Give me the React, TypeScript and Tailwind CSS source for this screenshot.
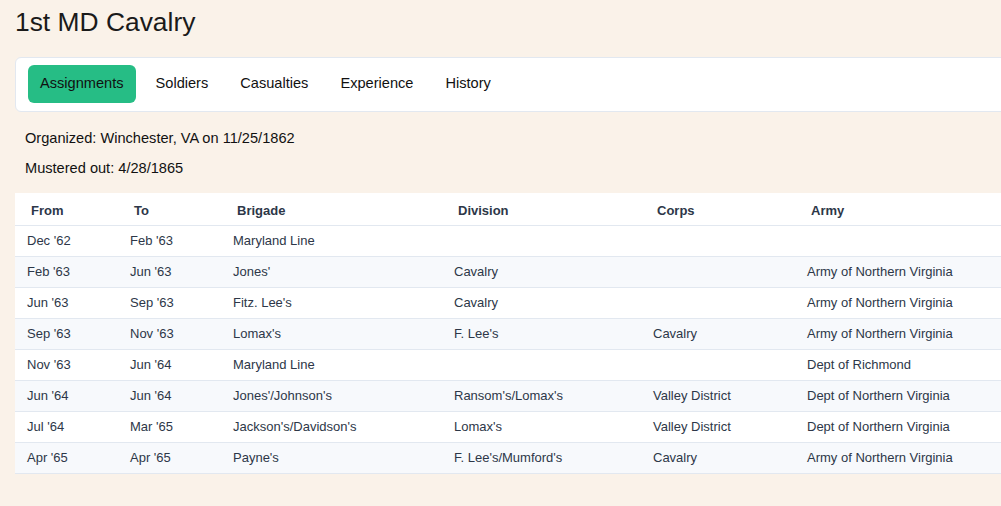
import React from 'react'

// ─── Data ─────────────────────────────────────────────────────────────────────

const TABS = ['Assignments', 'Soldiers', 'Casualties', 'Experience', 'History']

const COLUMNS = [
  { label: 'From',     width: 'w-[103px]' },
  { label: 'To',       width: 'w-[103px]' },
  { label: 'Brigade',  width: 'w-[221px]' },
  { label: 'Division', width: 'w-[199px]' },
  { label: 'Corps',    width: 'w-[154px]' },
  { label: 'Army',     width: 'w-[230px]' },
]

const ROWS = [
  ["Dec '62", "Feb '63", 'Maryland Line',         '',                   '',               ''],
  ["Feb '63", "Jun '63", "Jones'",                'Cavalry',            '',               'Army of Northern Virginia'],
  ["Jun '63", "Sep '63", "Fitz. Lee's",           'Cavalry',            '',               'Army of Northern Virginia'],
  ["Sep '63", "Nov '63", "Lomax's",               "F. Lee's",           'Cavalry',        'Army of Northern Virginia'],
  ["Nov '63", "Jun '64", 'Maryland Line',         '',                   '',               'Dept of Richmond'],
  ["Jun '64", "Jun '64", "Jones'/Johnson's",      "Ransom's/Lomax's",   'Valley District', 'Dept of Northern Virginia'],
  ["Jul '64", "Mar '65", "Jackson's/Davidson's",  "Lomax's",            'Valley District', 'Dept of Northern Virginia'],
  ["Apr '65", "Apr '65", "Payne's",               "F. Lee's/Mumford's", 'Cavalry',        'Army of Northern Virginia'],
]

// ─── Tabs ─────────────────────────────────────────────────────────────────────

function TabBar({ active }: { active: string }) {
  return (
    <div className="flex w-[1010px] items-center gap-2 rounded-md border border-[#e2e8f0] bg-white px-3 pt-[7px] pb-[8px]">
      {TABS.map(tab => (
        <button
          key={tab}
          className={
            tab === active
              ? 'h-[38px] rounded-md bg-[#26bd85] px-3 text-[14.6px] text-[#111]'
              : 'h-[38px] rounded-md px-3 text-[14.6px] text-[#111]'
          }
        >
          {tab}
        </button>
      ))}
    </div>
  )
}

// ─── Assignments table ───────────────────────────────────────────────────────

function AssignmentsTable() {
  return (
    <table className="w-[1010px] table-fixed border-collapse bg-white text-[13px] text-[#2d3748]">
      <colgroup>
        {COLUMNS.map(c => (
          <col key={c.label} className={c.width} />
        ))}
      </colgroup>
      <thead>
        <tr className="h-[32px] border-b border-[#e2e8f0]">
          {COLUMNS.map(c => (
            <th key={c.label} className="pl-4 pt-[3px] text-left font-bold">
              {c.label}
            </th>
          ))}
        </tr>
      </thead>
      <tbody>
        {ROWS.map((row, i) => (
          <tr
            key={i}
            className={
              i % 2 === 1
                ? 'h-[31px] border-b border-[#e2e8f0] bg-[#f7f9fc]'
                : 'h-[31px] border-b border-[#e2e8f0] bg-white'
            }
          >
            {row.map((cell, j) => (
              <td key={j} className="pl-3 whitespace-nowrap">
                {cell}
              </td>
            ))}
          </tr>
        ))}
      </tbody>
    </table>
  )
}

// ─── Page ─────────────────────────────────────────────────────────────────────

export default function App() {
  return (
    <div className="h-[506px] w-[1001px] overflow-hidden bg-[#faf2e9] font-['Liberation_Sans',Arial,sans-serif]">
      <div className="px-[15px] pt-[7px]">
        <h1 className="text-[26.4px] leading-[30px] text-[#1a1a1a]">1st MD Cavalry</h1>

        <div className="mt-[20px]">
          <TabBar active="Assignments" />
        </div>

        <div className="flex flex-col gap-[10px] px-[10px] pt-[16px] pb-[15px] text-[14.6px] leading-[20px] text-[#111]">
          <p>Organized: Winchester, VA on 11/25/1862</p>
          <p>Mustered out: 4/28/1865</p>
        </div>

        <AssignmentsTable />
      </div>
    </div>
  )
}
